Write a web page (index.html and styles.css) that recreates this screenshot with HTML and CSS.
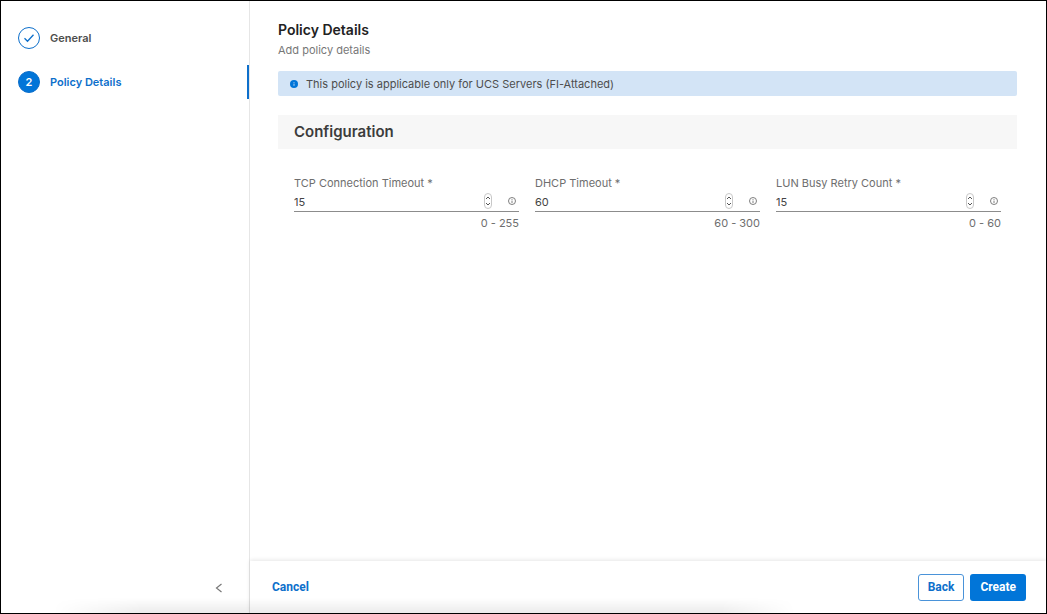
FILE: index.html
```html
<!DOCTYPE html>
<html lang="en">

<head>
    <meta charset="UTF-8">
    <meta name="viewport" content="width=device-width, initial-scale=1.0">
    <title>Policy Details</title>
    <link rel="stylesheet" href="styles.css">
</head>

<body>
    <div class="wizard">
        <nav class="sidebar">
            <ol class="steps">
                <li class="step">
                    <span class="badge">
                        <svg width="12" height="12" viewBox="0 0 12 12">
                            <path d="M1.5 6.3 4.5 9.3 10.5 2.7" />
                        </svg>
                    </span>
                    <a href="#">General</a>
                </li>
                <li class="step active">
                    <span class="badge">2</span>
                    <a href="#" aria-current="step">Policy Details</a>
                </li>
            </ol>
            <button class="collapse" type="button" aria-label="Collapse">
                <svg width="8" height="10" viewBox="0 0 8 10">
                    <path d="M6.5 1 1.5 5l5 4" />
                </svg>
            </button>
        </nav>

        <form class="content">
            <main class="page">
                <h1>Policy Details</h1>
                <p class="subtitle">Add policy details</p>
                <div class="notice">
                    <svg width="8" height="8" viewBox="0 0 8 8">
                        <circle cx="4" cy="4" r="4" fill="#0175d8" />
                        <path d="M4 3.6v2.2M4 2v.8" stroke="#b5d3f2" />
                    </svg>
                    <span>This policy is applicable only for UCS Servers (FI-Attached)</span>
                </div>
                <h2>Configuration</h2>
                <div class="fields">
                    <div class="field">
                        <label for="tcp">TCP Connection Timeout *</label>
                        <div class="control">
                            <input id="tcp" type="number" min="0" max="255" value="15" required>
                            <span class="spinner">
                                <button type="button" aria-label="Increase" onclick="step('tcp', 1)"><svg width="6" height="4" viewBox="0 0 6 4"><path d="M1 3 3 1l2 2" /></svg></button>
                                <button type="button" aria-label="Decrease" onclick="step('tcp', -1)"><svg width="6" height="4" viewBox="0 0 6 4"><path d="M1 1l2 2 2-2" /></svg></button>
                            </span>
                            <svg class="info" width="8" height="8" viewBox="0 0 8 8"><circle cx="4" cy="4" r="3.5" /><path d="M4 3.6V6M4 2v.8" /></svg>
                        </div>
                        <span class="range">0 - 255</span>
                    </div>
                    <div class="field">
                        <label for="dhcp">DHCP Timeout *</label>
                        <div class="control">
                            <input id="dhcp" type="number" min="60" max="300" value="60" required>
                            <span class="spinner">
                                <button type="button" aria-label="Increase" onclick="step('dhcp', 1)"><svg width="6" height="4" viewBox="0 0 6 4"><path d="M1 3 3 1l2 2" /></svg></button>
                                <button type="button" aria-label="Decrease" onclick="step('dhcp', -1)"><svg width="6" height="4" viewBox="0 0 6 4"><path d="M1 1l2 2 2-2" /></svg></button>
                            </span>
                            <svg class="info" width="8" height="8" viewBox="0 0 8 8"><circle cx="4" cy="4" r="3.5" /><path d="M4 3.6V6M4 2v.8" /></svg>
                        </div>
                        <span class="range">60 - 300</span>
                    </div>
                    <div class="field">
                        <label for="lun">LUN Busy Retry Count *</label>
                        <div class="control">
                            <input id="lun" type="number" min="0" max="60" value="15" required>
                            <span class="spinner">
                                <button type="button" aria-label="Increase" onclick="step('lun', 1)"><svg width="6" height="4" viewBox="0 0 6 4"><path d="M1 3 3 1l2 2" /></svg></button>
                                <button type="button" aria-label="Decrease" onclick="step('lun', -1)"><svg width="6" height="4" viewBox="0 0 6 4"><path d="M1 1l2 2 2-2" /></svg></button>
                            </span>
                            <svg class="info" width="8" height="8" viewBox="0 0 8 8"><circle cx="4" cy="4" r="3.5" /><path d="M4 3.6V6M4 2v.8" /></svg>
                        </div>
                        <span class="range">0 - 60</span>
                    </div>
                </div>
            </main>
            <footer class="footer">
                <button class="btn link" type="button">Cancel</button>
                <button class="btn outline" type="button">Back</button>
                <button class="btn primary" type="submit">Create</button>
            </footer>
        </form>
    </div>

    <script>
        function step(id, n) {
            var input = document.getElementById(id)
            // stepUp/stepDown keep the value between min and max
            if (n > 0) {
                input.stepUp()
            } else {
                input.stepDown()
            }
        }
    </script>
</body>

</html>
```
FILE: styles.css
```css
* {
    box-sizing: border-box;
}

html,
body {
    height: 100%;
    margin: 0;
}

body {
    background: #fff;
    color: #4d4d4d;
    font: 11px/16px Inter, sans-serif;
}

button,
input {
    font: inherit;
    color: inherit;
    margin: 0;
    padding: 0;
    border: 0;
    background: none;
}

button {
    cursor: pointer;
}

svg {
    display: block;
    flex: none;
    fill: none;
}

.wizard {
    position: relative;
    display: flex;
    min-height: 100%;
    border: 1px solid #000;
}

/* soft shade along the bottom edge */
.wizard::after {
    content: "";
    position: absolute;
    left: 5%;
    right: 24%;
    bottom: 0;
    height: 15px;
    background: linear-gradient(rgba(0, 0, 0, 0), rgba(0, 0, 0, 0.08));
    -webkit-mask-image: linear-gradient(90deg, transparent, #000 12%, #000 90%, transparent);
    mask-image: linear-gradient(90deg, transparent, #000 12%, #000 90%, transparent);
    pointer-events: none;
}

/* sidebar */
.sidebar {
    display: flex;
    flex-direction: column;
    justify-content: space-between;
    flex: none;
    width: 249px;
    padding: 20px 0 16px;
    border-right: 1px solid #e6e6e6;
}

.steps {
    display: flex;
    flex-direction: column;
    gap: 10px;
    margin: 0;
    padding: 0;
    list-style: none;
}

.step {
    display: flex;
    align-items: center;
    gap: 10px;
    height: 34px;
    padding-left: 17px;
    font-weight: 600;
}

.step a {
    color: inherit;
    text-decoration: none;
}

.step.active {
    color: #0d6fcb;
    border-right: 2px solid #0d6fcb;
}

.badge {
    display: flex;
    align-items: center;
    justify-content: center;
    width: 22px;
    height: 22px;
    border: 1px solid #0d6fcb;
    border-radius: 50%;
}

.badge svg {
    stroke: #0d6fcb;
    stroke-width: 1.3;
}

.active .badge {
    background: #0175d8;
    color: #fff;
}

.collapse {
    align-self: flex-end;
    padding: 4px;
    margin-right: 22px;
}

.collapse svg {
    stroke: #777;
    stroke-width: 1.2;
}

/* content */
.content {
    display: flex;
    flex-direction: column;
    flex: 1;
    min-width: 0;
}

.page {
    flex: 1;
    padding: 20px 29px 20px 28px;
}

h1,
h2 {
    margin: 0;
    font-size: 14px;
    font-weight: 600;
    line-height: 18px;
}

h1 {
    color: #222;
}

h2 {
    padding: 8px 16px;
    margin-top: 19px;
    background: #f7f7f7;
    color: #3c3c3c;
    font-size: 15px;
}

.subtitle {
    margin: 3px 0 13px;
    color: #777;
}

.notice {
    display: flex;
    align-items: center;
    gap: 8px;
    min-height: 25px;
    padding: 4px 12px;
    border-radius: 2px;
    background: #d3e4f6;
}

.fields {
    display: grid;
    grid-template-columns: repeat(3, 1fr);
    gap: 16px;
    padding: 26px 16px;
}

.field {
    display: flex;
    flex-direction: column;
    color: #6e6e6e;
}

.control {
    display: flex;
    align-items: center;
    height: 21px;
    margin-bottom: 3px;
    padding-right: 3px;
    border-bottom: 1px solid #8c8c8c;
}

.control input {
    flex: 1;
    min-width: 0;
    padding-top: 2px;
    color: #444;
    -moz-appearance: textfield;
    appearance: textfield;
}

.control input::-webkit-inner-spin-button {
    display: none;
}

.spinner {
    display: flex;
    flex-direction: column;
    justify-content: space-between;
    width: 8px;
    height: 16px;
    padding: 2px 0;
    margin-right: 16px;
    border: 1px solid #c8c8c8;
    border-radius: 4px;
}

.spinner svg {
    stroke: #555;
}

.info {
    stroke: #707070;
    stroke-width: 0.9;
}

.range {
    align-self: flex-end;
}

/* footer */
.footer {
    display: flex;
    align-items: center;
    gap: 6px;
    height: 52px;
    padding: 0 20px 0 22px;
    box-shadow: 0 -1px 4px rgba(0, 0, 0, 0.1);
}

.btn {
    height: 27px;
    padding: 0 9px;
    border: 1px solid transparent;
    border-radius: 3px;
    color: #0d6fcb;
    font: 700 12px/16px Roboto, sans-serif;
}

.btn.link {
    margin-right: auto;
    padding: 0;
    border: 0;
}

.btn.outline {
    border-color: #4a93d9;
}

.btn.primary {
    background: #0175d8;
    color: #fff;
}
```
